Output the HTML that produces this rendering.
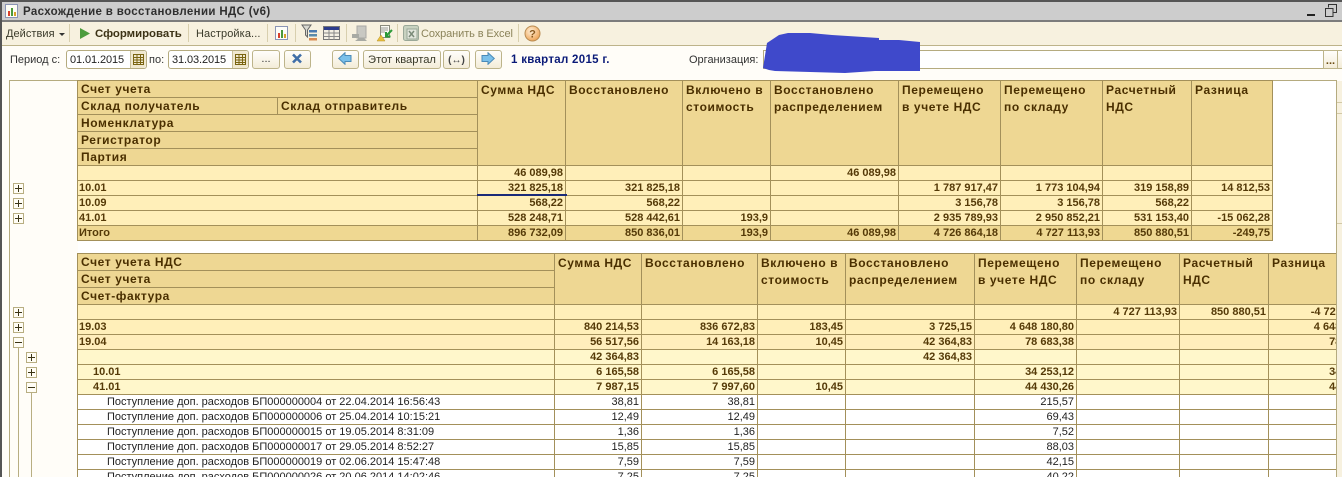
<!DOCTYPE html>
<html lang="ru"><head><meta charset="utf-8"><title>Расхождение в восстановлении НДС</title>
<style>
html,body{margin:0;padding:0}
body{width:1342px;height:477px;overflow:hidden;position:relative;background:#fffdf8;font:11px/14px "Liberation Sans",Arial,sans-serif;color:#333}
.a{position:absolute;white-space:nowrap}
.btn{position:absolute;top:50px;height:17px;border:1px solid #bdb48a;border-radius:3px;background:linear-gradient(#fffefb,#f3ecd8);box-sizing:content-box;text-align:center;line-height:17px;color:#333}
.inp{position:absolute;top:50px;width:79px;height:17px;border:1px solid #b5ab7f;border-radius:3px;background:#fff;line-height:19px;text-indent:3px;color:#222;font-size:11px;letter-spacing:-.1px}
.inp i{position:absolute;right:0;top:0;width:15px;height:17px;background:#f0e8cf;border-left:1px solid #c9bf98;border-radius:0 3px 3px 0}
.sep{position:absolute;top:24px;height:18px;width:1px;background:#d8cfae}
table{position:absolute;border-collapse:collapse;table-layout:fixed;font-family:"Liberation Sans",Arial,sans-serif}
td{border:1px solid #a3905a;padding:0;overflow:hidden;white-space:nowrap;box-sizing:border-box}
.h td{background:#eed793;color:#4a2f00;font-weight:bold;font-size:12px;letter-spacing:.6px;line-height:15px;padding-left:3px;vertical-align:top;padding-top:1px;white-space:pre-line}
.h td[rowspan]{line-height:17px}
.d td{text-align:right;padding-right:2px;font-size:11px;font-weight:bold;color:#553a08;line-height:14px;height:15px}
.d td:first-child{text-align:left;padding:0 0 0 1px}
.d td.l1{padding-left:15px}
.d td.l2{padding-left:29px;font-weight:normal}
.y{background:#ffefb9}.t{background:#efd892}.g{background:#ffeebc}.s{background:#fff7cb}
tr.w td{background:#fff;color:#222;font-weight:normal}
.tb{position:absolute;width:11px;height:11px;box-sizing:border-box;border:1px solid #b8ae82;background:#fffdf5}
.tb:before{content:"";position:absolute;left:1px;top:4px;width:7px;height:1px;background:#3b3415}
.tb.p:after{content:"";position:absolute;left:4px;top:1px;width:1px;height:7px;background:#3b3415}
.lg{position:absolute;width:1px;background:#b8ae82}
</style></head><body>

<!-- Title bar -->
<div class="a" style="left:0;top:0;width:1342px;height:20px;background:#cdcdcd;border-top:2px solid #555;box-sizing:border-box"></div>
<div class="a" style="left:0;top:20px;width:1342px;height:2px;background:#7c7c7c"></div>
<svg class="a" style="left:4px;top:3px" width="16" height="15" viewBox="0 0 16 15"><rect x="1.5" y="1.5" width="12" height="13" fill="#fdfdf4" stroke="#8a94b4"/><rect x="4" y="8" width="2" height="5" fill="#d8402a"/><rect x="7" y="5" width="2" height="8" fill="#4a9a3a"/><rect x="10" y="9" width="2" height="4" fill="#d8a02a"/></svg>
<div class="a" style="left:23px;top:5px;font-weight:bold;font-size:11.5px;color:#2f2f2f;letter-spacing:.35px">Расхождение в восстановлении НДС (v6)</div>
<div class="a" style="left:1307px;top:14px;width:8px;height:2px;background:#222"></div>
<svg class="a" style="left:1325px;top:4px" width="12" height="13" viewBox="0 0 12 13"><path d="M3.500 3.500V.5H11.500V8.500H8.500M.5 4.500H8V12.500H.5Z" fill="none" stroke="#333"/></svg>

<!-- Toolbar -->
<div class="a" style="left:0;top:22px;width:1342px;height:23px;background:#f7f1df"></div>
<div class="a" style="left:0;top:45px;width:1342px;height:1px;background:#bdb38a"></div>
<div class="a" style="left:6px;top:27px;color:#3a3a2a;letter-spacing:.05px">Действия</div>
<div class="a" style="left:59px;top:33px;width:0;height:0;border:3px solid transparent;border-top:3px solid #333"></div>
<div class="sep" style="left:69px"></div>
<svg class="a" style="left:79px;top:27px" width="12" height="13" viewBox="0 0 12 13"><path d="M1 1L11 6.500L1 12Z" fill="#4c9c3c"/></svg>
<div class="a" style="left:95px;top:27px;font-weight:bold;font-size:11.4px;color:#3c3216">Сформировать</div>
<div class="sep" style="left:188px"></div>
<div class="a" style="left:196px;top:27px;color:#3a3a2a;letter-spacing:.1px">Настройка...</div>
<div class="sep" style="left:267px"></div>
<svg class="a" style="left:274px;top:25px" width="15" height="16" viewBox="0 0 15 16"><rect x="1.500" y="1.500" width="12" height="13" fill="#fdfdf8" stroke="#8a94b4"/><rect x="4" y="8" width="2" height="5" fill="#d8402a"/><rect x="7" y="5" width="2" height="8" fill="#4a9a3a"/><rect x="10" y="9" width="2" height="4" fill="#d8a02a"/></svg>
<div class="sep" style="left:295px"></div>
<svg class="a" style="left:301px;top:24px" width="17" height="18" viewBox="0 0 17 18"><path d="M1 1H10L6.500 6V13L4.500 11V6Z" fill="#d8d8d0" stroke="#666"/><rect x="8" y="6" width="8" height="2.500" fill="#4a7ab0"/><rect x="8" y="10" width="8" height="2.500" fill="#5a8aaa"/><rect x="8" y="14" width="8" height="2.500" fill="#d88a50"/></svg>
<svg class="a" style="left:323px;top:26px" width="18" height="15" viewBox="0 0 18 15"><rect x=".5" y=".5" width="16" height="13" fill="#f4f0e4" stroke="#777"/><rect x="1" y="1" width="15" height="3" fill="#2c3c8c"/><path d="M1 7H16M1 10.500H16M6 4V14M11 4V14" stroke="#888" fill="none"/></svg>
<div class="sep" style="left:346px"></div>
<svg class="a" style="left:351px;top:25px" width="18" height="17" viewBox="0 0 18 17"><rect x="6" y="1" width="9" height="12" fill="#c8c8c2" stroke="#a8a8a4"/><path d="M1 9H8V13H1ZM8 13L4 16H16L13 13" fill="#a8aaa4"/></svg>
<svg class="a" style="left:376px;top:25px" width="17" height="17" viewBox="0 0 17 17"><rect x="4.500" y=".5" width="9" height="12" fill="#fbfbf4" stroke="#8a8a7c"/><path d="M5 3H12M5 5H12M5 7H9" stroke="#9a9a94"/><path d="M16 5L10 11M10 7V11.500H14.500" stroke="#2a9a38" stroke-width="2" fill="none"/><path d="M1 16L5 10L9 16Z" fill="#e8c040" stroke="#b89020" stroke-width=".5"/></svg>
<div class="sep" style="left:397px"></div>
<svg class="a" style="left:403px;top:25px" width="16" height="16" viewBox="0 0 16 16"><rect x=".5" y=".5" width="15" height="15" rx="2" fill="#c8d2c0" stroke="#9aa898"/><rect x="4" y="4" width="10" height="10" fill="#e2e6dc" stroke="#9aa898"/><path d="M6 6L11 12M11 6L6 12" stroke="#7a8a78" stroke-width="1.500"/></svg>
<div class="a" style="left:421px;top:27px;color:#8b835a;letter-spacing:-.1px">Сохранить в Excel</div>
<div class="sep" style="left:518px"></div>
<svg class="a" style="left:524px;top:25px" width="17" height="17" viewBox="0 0 17 17"><defs><radialGradient id="o" cx=".4" cy=".35" r=".7"><stop offset="0" stop-color="#fff0d8"/><stop offset="1" stop-color="#eda050"/></radialGradient></defs><circle cx="8.500" cy="8.500" r="7.500" fill="url(#o)" stroke="#b88a50"/><text x="8.500" y="12.500" text-anchor="middle" font-family="Liberation Sans" font-size="11" font-weight="bold" fill="#8a5a20">?</text></svg>

<!-- Period row -->
<div class="a" style="left:10px;top:53px;color:#333">Период с:</div>
<div class="inp" style="left:66px">01.01.2015<i></i></div>
<svg class="a" style="left:133px;top:54px" width="11" height="11" viewBox="0 0 11 11"><path d="M.5.5H10.500V10.500H.5ZM.5 3.500H10.500M.5 6H10.500M.5 8.500H10.500M4 .5V10.500M7.500 .5V10.500" stroke="#7a6410" fill="none"/></svg>
<div class="a" style="left:149px;top:53px;color:#333">по:</div>
<div class="inp" style="left:168px">31.03.2015<i></i></div>
<svg class="a" style="left:235px;top:54px" width="11" height="11" viewBox="0 0 11 11"><path d="M.5.5H10.500V10.500H.5ZM.5 3.500H10.500M.5 6H10.500M.5 8.500H10.500M4 .5V10.500M7.500 .5V10.500" stroke="#7a6410" fill="none"/></svg>
<div class="btn" style="left:252px;width:26px">...</div>
<div class="btn" style="left:284px;width:25px"></div>
<svg class="a" style="left:291px;top:53px" width="12" height="11" viewBox="0 0 12 11"><path d="M2 1.500L10 9.500M10 1.500L2 9.500" stroke="#3f6ea8" stroke-width="2.600"/></svg>
<div class="btn" style="left:332px;width:25px"></div>
<svg class="a" style="left:338px;top:52px" width="14" height="13" viewBox="0 0 14 13"><path d="M.7 6.500L7 .7V3.500H13V9.500H7V12.300Z" fill="#7ac0ea" stroke="#4a8ab8"/></svg>
<div class="btn" style="left:363px;width:76px;font-size:11.2px;line-height:19px;color:#3a3a2a">Этот квартал</div>
<div class="btn" style="left:443px;width:25px;font-weight:bold;font-size:10px;line-height:19px;color:#444">(↔)</div>
<div class="btn" style="left:475px;width:25px"></div>
<svg class="a" style="left:481px;top:52px" width="14" height="13" viewBox="0 0 14 13"><path d="M13.300 6.500L7 .7V3.500H1V9.500H7V12.300Z" fill="#7ac0ea" stroke="#4a8ab8"/></svg>
<div class="a" style="left:511px;top:53px;font-weight:bold;color:#0a1a78;font-size:11.500px;letter-spacing:.3px">1 квартал 2015 г.</div>
<div class="a" style="left:689px;top:53px;color:#333">Организация:</div>
<div class="a" style="left:763px;top:50px;width:559px;height:17px;border:1px solid #b5ab7f;background:#fff;border-right:0"></div>
<div class="btn" style="left:1323px;width:13px;border-radius:0;color:#6a4a10;font-weight:bold;line-height:20px">...</div>
<div class="btn" style="left:1337px;width:13px;border-radius:0;color:#6a4a10;font-weight:bold">:</div>
<svg class="a" style="left:760px;top:30px" width="164" height="44" viewBox="0 0 164 44"><path d="M3 38L7 13L19 5L28 3L50 3L72 5L119 8L119 10L139 10L160 12L160 41L115 41L85 43L50 42L15 41L9 40Z" fill="#3f49cb"/></svg>

<!-- Report grid -->
<div class="a" style="left:9px;top:80px;width:1328px;height:397px;background:#fffdf8;border-top:1px solid #b5ab7f;border-left:1px solid #b5ab7f;border-right:1px solid #b5ab7f;box-sizing:border-box"></div>
<div class="a" style="left:78px;top:81px;width:1258px;height:396px;background:#fff"></div>
<div class="a" style="left:1337px;top:81px;width:5px;height:396px;background:#f7f1df"></div>
<div class="a" style="left:1337px;top:102px;width:5px;height:1px;background:#d2c9a6"></div>
<div class="a" style="left:1337px;top:113px;width:5px;height:1px;background:#d2c9a6"></div>
<div class="a" style="left:1337px;top:223px;width:5px;height:1px;background:#d2c9a6"></div>

<table style="left:77px;top:80px;width:1195px">
<colgroup><col style="width:200px"><col style="width:200px"><col style="width:88px"><col style="width:117px"><col style="width:88px"><col style="width:128px"><col style="width:102px"><col style="width:102px"><col style="width:89px"><col style="width:81px"></colgroup>
<tbody class="h">
<tr style="height:17px"><td colspan="2">Счет учета</td><td rowspan="5">Сумма НДС</td><td rowspan="5">Восстановлено</td><td rowspan="5">Включено в
стоимость</td><td rowspan="5">Восстановлено
распределением</td><td rowspan="5">Перемещено
в учете НДС</td><td rowspan="5">Перемещено
по складу</td><td rowspan="5">Расчетный
НДС</td><td rowspan="5">Разница</td></tr>
<tr style="height:17px"><td>Склад получатель</td><td>Склад отправитель</td></tr>
<tr style="height:17px"><td colspan="2">Номенклатура</td></tr>
<tr style="height:17px"><td colspan="2">Регистратор</td></tr>
<tr style="height:17px"><td colspan="2">Партия</td></tr>
</tbody>
<tbody class="d">
<tr class="y"><td colspan="2"></td><td>46 089,98</td><td></td><td></td><td>46 089,98</td><td></td><td></td><td></td><td></td></tr>
<tr class="y"><td colspan="2">10.01</td><td>321 825,18</td><td>321 825,18</td><td></td><td></td><td>1 787 917,47</td><td>1 773 104,94</td><td>319 158,89</td><td>14 812,53</td></tr>
<tr class="y"><td colspan="2">10.09</td><td>568,22</td><td>568,22</td><td></td><td></td><td>3 156,78</td><td>3 156,78</td><td>568,22</td><td></td></tr>
<tr class="y"><td colspan="2">41.01</td><td>528 248,71</td><td>528 442,61</td><td>193,9</td><td></td><td>2 935 789,93</td><td>2 950 852,21</td><td>531 153,40</td><td>-15 062,28</td></tr>
<tr class="t"><td colspan="2">Итого</td><td>896 732,09</td><td>850 836,01</td><td>193,9</td><td>46 089,98</td><td>4 726 864,18</td><td>4 727 113,93</td><td>850 880,51</td><td>-249,75</td></tr>
</tbody></table>
<div class="a" style="left:477px;top:194px;width:90px;height:2px;background:#1a2a78"></div>

<div class="a" style="left:77px;top:253px;width:1259px;height:224px;overflow:hidden">
<table style="left:0;top:0;width:1303px">
<colgroup><col style="width:477px"><col style="width:87px"><col style="width:116px"><col style="width:88px"><col style="width:129px"><col style="width:102px"><col style="width:103px"><col style="width:89px"><col style="width:112px"></colgroup>
<tbody class="h">
<tr style="height:17px"><td>Счет учета НДС</td><td rowspan="3">Сумма НДС</td><td rowspan="3">Восстановлено</td><td rowspan="3">Включено в
стоимость</td><td rowspan="3">Восстановлено
распределением</td><td rowspan="3">Перемещено
в учете НДС</td><td rowspan="3">Перемещено
по складу</td><td rowspan="3">Расчетный
НДС</td><td rowspan="3">Разница</td></tr>
<tr style="height:17px"><td>Счет учета</td></tr>
<tr style="height:17px"><td>Счет-фактура</td></tr>
</tbody>
<tbody class="d">
<tr class="y"><td></td><td></td><td></td><td></td><td></td><td></td><td>4 727 113,93</td><td>850 880,51</td><td>-4 727 113,93</td></tr>
<tr class="y"><td>19.03</td><td>840 214,53</td><td>836 672,83</td><td>183,45</td><td>3 725,15</td><td>4 648 180,80</td><td></td><td></td><td>4 648 180,80</td></tr>
<tr class="g"><td>19.04</td><td>56 517,56</td><td>14 163,18</td><td>10,45</td><td>42 364,83</td><td>78 683,38</td><td></td><td></td><td>78 683,38</td></tr>
<tr class="s"><td></td><td>42 364,83</td><td></td><td></td><td>42 364,83</td><td></td><td></td><td></td><td></td></tr>
<tr class="s"><td class="l1">10.01</td><td>6 165,58</td><td>6 165,58</td><td></td><td></td><td>34 253,12</td><td></td><td></td><td>34 253,12</td></tr>
<tr class="s"><td class="l1">41.01</td><td>7 987,15</td><td>7 997,60</td><td>10,45</td><td></td><td>44 430,26</td><td></td><td></td><td>44 430,26</td></tr>
<tr class="w"><td class="l2">Поступление доп. расходов  БП000000004 от 22.04.2014 16:56:43</td><td>38,81</td><td>38,81</td><td></td><td></td><td>215,57</td><td></td><td></td><td></td></tr>
<tr class="w"><td class="l2">Поступление доп. расходов  БП000000006 от 25.04.2014 10:15:21</td><td>12,49</td><td>12,49</td><td></td><td></td><td>69,43</td><td></td><td></td><td></td></tr>
<tr class="w"><td class="l2">Поступление доп. расходов  БП000000015 от 19.05.2014 8:31:09</td><td>1,36</td><td>1,36</td><td></td><td></td><td>7,52</td><td></td><td></td><td></td></tr>
<tr class="w"><td class="l2">Поступление доп. расходов  БП000000017 от 29.05.2014 8:52:27</td><td>15,85</td><td>15,85</td><td></td><td></td><td>88,03</td><td></td><td></td><td></td></tr>
<tr class="w"><td class="l2">Поступление доп. расходов  БП000000019 от 02.06.2014 15:47:48</td><td>7,59</td><td>7,59</td><td></td><td></td><td>42,15</td><td></td><td></td><td></td></tr>
<tr class="w"><td class="l2">Поступление доп. расходов  БП000000026 от 20.06.2014 14:02:46</td><td>7,25</td><td>7,25</td><td></td><td></td><td>40,22</td><td></td><td></td><td></td></tr>
</tbody></table>
</div>

<!-- Tree controls -->
<div class="tb p" style="left:13px;top:183px"></div>
<div class="tb p" style="left:13px;top:198px"></div>
<div class="tb p" style="left:13px;top:213px"></div>
<div class="tb p" style="left:13px;top:307px"></div>
<div class="tb p" style="left:13px;top:322px"></div>
<div class="tb" style="left:13px;top:337px"></div>
<div class="lg" style="left:18px;top:348px;height:129px"></div>
<div class="tb p" style="left:26px;top:352px"></div>
<div class="tb p" style="left:26px;top:367px"></div>
<div class="tb" style="left:26px;top:382px"></div>
<div class="lg" style="left:31px;top:393px;height:84px"></div>
<div class="a" style="left:0;top:0;width:2px;height:477px;background:#555"></div>
</body></html>
